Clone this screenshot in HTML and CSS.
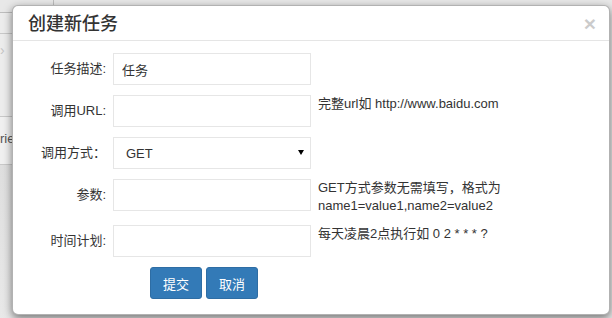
FILE: index.html
```html
<!DOCTYPE html>
<html lang="zh-CN">
  <head>
    <meta charset="utf8" />
    <meta name="viewport" content="width=device-width, initial-scale=1" />
    <title>创建新任务</title>
    <link rel="stylesheet" href="styles.css">
  </head>
  <body>
    <!-- page behind the dialog -->
    <div class="page">
      <div class="page-topbar"></div>
      <div class="page-side">
        <div class="side-cell side-head"></div>
        <div class="side-cell side-nav">&rsaquo;</div>
        <div class="side-cell side-text">rie</div>
        <div class="side-cell side-fill"></div>
      </div>
    </div>

    <div class="modal">
      <div class="modal-header">
        <h4 class="modal-title">创建新任务</h4>
        <button class="close" type="button">&times;</button>
      </div>
      <form class="modal-body">
        <div class="form-row">
          <label class="form-label">任务描述:</label>
          <input class="form-input" type="text" value="任务" />
        </div>
        <div class="form-row">
          <label class="form-label">调用URL:</label>
          <input class="form-input" type="text" />
          <div class="form-help">完整url如 http://www.baidu.com</div>
        </div>
        <div class="form-row">
          <label class="form-label">调用方式：</label>
          <div class="select-wrap">
            <select class="form-input form-select">
              <option>GET</option>
              <option>POST</option>
            </select>
          </div>
        </div>
        <div class="form-row">
          <label class="form-label">参数:</label>
          <input class="form-input" type="text" />
          <div class="form-help">GET方式参数无需填写，格式为<br />name1=value1,name2=value2</div>
        </div>
        <div class="form-row">
          <label class="form-label">时间计划:</label>
          <input class="form-input" type="text" />
          <div class="form-help">每天凌晨2点执行如 0 2 * * * ?</div>
        </div>
        <div class="form-actions">
          <button class="btn" type="button">提交</button>
          <button class="btn" type="button">取消</button>
        </div>
      </form>
    </div>
  </body>
</html>
```

FILE: styles.css
```css
/* Reset */
body, html {
  margin: 0;
  padding: 0;
  font-family: "Liberation Sans", "Noto Sans CJK SC", sans-serif;
  font-size: 13px;
  color: #333;
}
* {
  box-sizing: border-box;
}
body {
  background: #e8e8e8;
  height: 318px;
  overflow: hidden;
}

/* page behind */
.page {
  height: 318px;
}
.page-topbar {
  width: 54px;
  height: 13px;
  border-right: 1px solid #bdbdbd;
  border-bottom: 1px solid #bdbdbd;
}
.page-side {
  width: 12px;
  background: #ececec;
}
.side-cell {
  border-bottom: 1px solid #c8c8c8;
  color: #777;
  white-space: nowrap;
}
.side-head {
  height: 21px;
}
.side-nav {
  height: 83px;
  padding-top: 8px;
  color: #c4c4c4;
  font-size: 14px;
}
.side-text {
  height: 48px;
  padding-top: 14px;
  font-size: 13px;
  color: #555;
  background: #f0f0f0;
}
.side-fill {
  height: 160px;
  border: 0;
  background: linear-gradient(#dedede, #e9e9e9);
}

/* dialog */
.modal {
  position: absolute;
  top: 5px;
  left: 12px;
  width: 598px;
  background: #fff;
  border: 1px solid rgba(0, 0, 0, .3);
  border-radius: 6px;
  box-shadow: 0 3px 9px rgba(0, 0, 0, .5);
}
.modal-header {
  display: flex;
  align-items: center;
  justify-content: space-between;
  height: 35px;
  padding: 0 13px 0 15px;
  border-bottom: 1px solid #e5e5e5;
}
.modal-title {
  margin: 0;
  font-family: "Noto Sans CJK SC", sans-serif;
  font-size: 18px;
  font-weight: 500;
  line-height: 20px;
  color: #333;
  padding-bottom: 2px;
}
.close {
  padding: 0;
  border: 0;
  background: none;
  font-family: "Liberation Sans", sans-serif;
  font-size: 21px;
  font-weight: bold;
  line-height: 1;
  color: #000;
  opacity: .2;
  cursor: pointer;
}
.modal-body {
  margin: 0;
  padding: 12px 15px 15px;
}
.form-row {
  display: flex;
  align-items: flex-start;
  margin-bottom: 10px;
}
.form-label {
  width: 78px;
  margin-right: 7px;
  text-align: right;
  line-height: 32px;
  white-space: nowrap;
}
.form-input {
  width: 198px;
  height: 32px;
  margin: 0;
  padding: 0 8px;
  border: 1px solid #e6e6e6;
  border-radius: 0;
  background: #fff;
  font: inherit;
  color: #333;
  outline: none;
}
.select-wrap {
  position: relative;
}
.form-select {
  appearance: none;
  -webkit-appearance: none;
  padding: 0 12px;
}
.select-wrap::after {
  content: "";
  position: absolute;
  right: 7px;
  top: 13px;
  border-left: 3px solid transparent;
  border-right: 3px solid transparent;
  border-top: 5px solid #000;
  pointer-events: none;
}
.form-help {
  margin-left: 7px;
  line-height: 18px;
}
.form-actions {
  padding-left: 122px;
  display: flex;
  gap: 4px;
}
.btn {
  height: 32px;
  padding: 0 12px;
  border: 1px solid #2e6da4;
  border-radius: 3px;
  background: #337ab7;
  color: #fff;
  font: inherit;
  font-size: 13px;
  cursor: pointer;
}
```
